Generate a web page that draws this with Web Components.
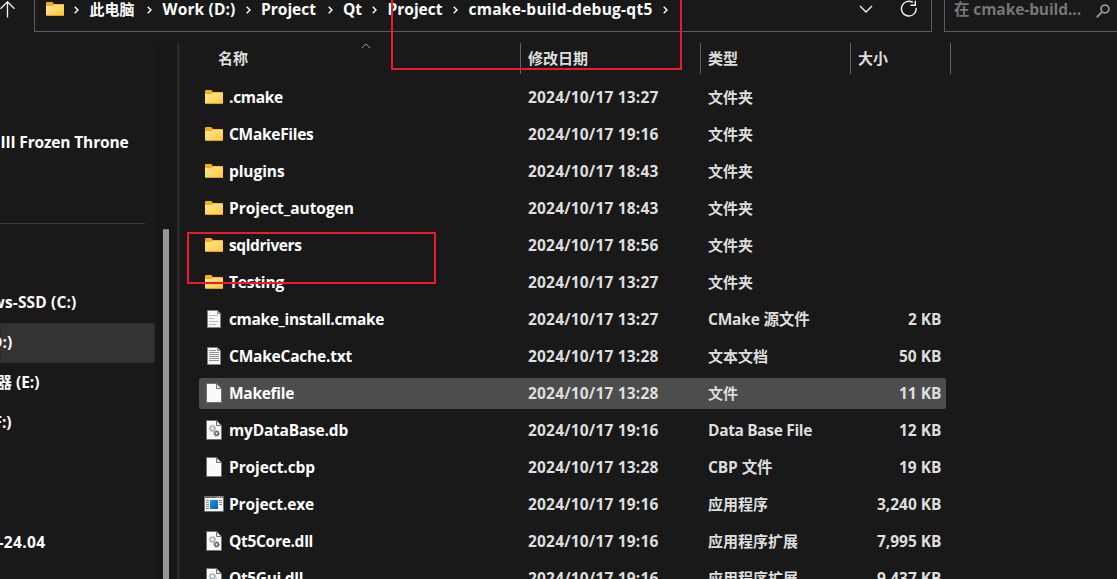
<!DOCTYPE html>
<html lang="zh-CN">
<head>
<meta charset="utf-8">
<title>cmake-build-debug-qt5</title>
<style>
html,body{margin:0;height:100%;background:#191919;overflow:hidden}
body{font:700 15.5px/20px "Open Sans","Noto Sans CJK SC",sans-serif;color:#fff}
</style>
</head>
<body>
<file-explorer></file-explorer>
<script>
const define = (name, html, setup) => customElements.define(name, class extends HTMLElement {
  connectedCallback() {
    if (this.shadowRoot) return;
    const t = document.createElement('template');
    t.innerHTML = html;
    this.attachShadow({mode: 'open'}).append(t.content.cloneNode(true));
    if (setup) setup(this, this.shadowRoot);
  }
});

/* Label whose tracking is adjusted so that it occupies the width "w". */
define('fit-label', `<style>:host{display:block;white-space:pre;line-height:18px;height:18px;padding-bottom:2px}span{display:inline-block}</style><span></span>`, (el, root) => {
  const s = root.querySelector('span');
  s.textContent = el.getAttribute('text');
  if (!/[\x21-\x7e]/.test(s.textContent)) s.style.fontSize = '15px';
  const w = parseFloat(el.getAttribute('w'));
  if (w) {
    const n = s.getBoundingClientRect().width;
    if (n) s.style.letterSpacing = ((w - n) / [...s.textContent].length).toFixed(3) + 'px';
  }
});

const page = `<path d="M.5.5h10.2l4.8 4.8v14.2H.5z" fill="#fafafa" stroke="#74706c"/><path d="M10.5.5v5h5z" fill="#e4e4e4" stroke="#74706c"/>`;
const gear = (x, y, r, c) => `<g fill="none" stroke="${c}"><circle cx="${x}" cy="${y}" r="${r}" stroke-width="1.4"/><circle cx="${x}" cy="${y}" r="${r + .9}" stroke-width="1" stroke-dasharray="1.1 1.2"/></g>`;
const smallPage = lines => `<path d="M1.5 1.5h10l3 3v14h-13z" fill="#f7f8f7" stroke="#85827f"/><path d="M11.5 1.5v3h3z" fill="#ddd" stroke="#85827f"/>${lines}`;
const icons = {
  folder: [18, 14, `<defs><linearGradient id="f" x2="1" y2="1"><stop stop-color="#ffe7a1"/><stop offset="1" stop-color="#ffc937"/></linearGradient></defs><path d="M0 1Q0 0 1 0h5.2l1.8 2h9q1 0 1 1v10q0 1-1 1H1q-1 0-1-1z" fill="#f8ad12"/><path d="M0 4h6.6l1.6-1.2H18V13H0z" fill="url(#f)"/><path d="M.5 13.5h17" stroke="#dfa126"/>`],
  page: [16, 20, page],
  gears: [16, 20, page + gear(6.4, 8.4, 2.3, '#a3adb9') + gear(10.6, 13.4, 1.8, '#59616b')],
  source: [16, 20, smallPage(`<path d="M3 6.5h9M3 9.5h5M3 12.5h9M3 15.5h7" stroke="#b8b9ba"/>`)],
  text: [16, 20, smallPage(`<path d="M3 4.5h7M3 6.5h10M3 8.5h10M3 10.5h10M3 12.5h10M3 14.5h10" stroke="#929292"/>`)],
  exe: [20, 16, `<defs><linearGradient id="e" x2="1" y2="1"><stop stop-color="#199ae4"/><stop offset="1" stop-color="#0561b8"/></linearGradient></defs><path d="M.5.5h19v15H.5z" fill="#fafafa" stroke="#716e6b"/><path d="M0 0h20v2H0z" fill="#716e6b"/><path d="M13 1h1m1 0h1m1 0h1" stroke="#ddd"/><path d="M6 4h8v9H6z" fill="url(#e)"/><path d="M2 4.5h3M2 6.5h3M2 8.5h3M2 10.5h3M2 12.5h3M15 4.5h3M15 6.5h3M15 8.5h3" stroke="#888"/>`],
  up: [17, 17, `<path d="M8.5 16.5V1M1.5 7.8l7-7 7 7" fill="none" stroke="#f2f2f2" stroke-width="1.3"/>`],
  crumb: [5, 8, `<path d="M.7.8 4 4 .7 7.2" fill="none" stroke="#fff" stroke-width="1.4"/>`],
  down: [14, 8, `<path d="M1 1l6 6 6-6" fill="none" stroke="#f2f2f2" stroke-width="1.4"/>`],
  refresh: [18, 18, `<path d="M12.8 2.4A7.4 7.4 0 1 0 16.2 7.8M15.3.7v4.6h-4.8" fill="none" stroke="#f2f2f2" stroke-width="1.4"/>`],
  search: [14, 14, `<circle cx="9" cy="5" r="3.9" fill="none" stroke="#929292" stroke-width="1.8"/><path d="M6.1 7.9.8 13.2" stroke="#929292" stroke-width="2"/>`],
  sort: [10, 6, `<path d="M.7 5.2 5 .9l4.3 4.3" fill="none" stroke="#a0a0a0"/>`]
};
define('ui-icon', `<style>:host{display:block;flex:none}svg{display:block}</style><div></div>`, (el, root) => {
  const [w, h, body] = icons[el.getAttribute('name')];
  root.querySelector('div').innerHTML = `<svg width="${w}" height="${h}" viewBox="0 0 ${w} ${h}">${body}</svg>`;
});

define('path-crumb', `<style>:host{display:flex;align-items:center;gap:10.5px;flex:none;height:20px}</style><ui-icon name="crumb"></ui-icon><slot></slot>`,
  el => { el.style.width = el.getAttribute('size') + 'px'; });

define('address-bar', `<style>
:host{display:flex;height:32px;box-sizing:border-box}
.up{width:34px}.up ui-icon{margin:1px 0 0 -1px}
.path{width:898px;height:32px;box-sizing:border-box;border:1px solid #5b5b5b;border-top:0;display:flex;align-items:flex-start;padding-left:11px}
.path>ui-icon.f{margin:2px 10px 0 0}
.actions{margin-left:auto;display:flex;gap:27px;padding-right:13px}
.actions ui-icon:first-child{margin-top:5px}
.search{margin-left:12px;flex:1;height:32px;box-sizing:border-box;border:1px solid #5b5b5b;border-top:0;border-right:0;display:flex;justify-content:space-between;padding:0 7px 0 9px;color:#767676}
.search ui-icon{margin-top:4px}
</style>
<div class="up"><ui-icon name="up"></ui-icon></div>
<div class="path"><ui-icon class="f" name="folder"></ui-icon>
<path-crumb size="73"><fit-label text="此电脑" w="45"></fit-label></path-crumb>
<path-crumb size="98.5"><fit-label text="Work (D:)" w="73"></fit-label></path-crumb>
<path-crumb size="82"><fit-label text="Project" w="55"></fit-label></path-crumb>
<path-crumb size="44.5"><fit-label text="Qt" w="19"></fit-label></path-crumb>
<path-crumb size="81"><fit-label text="Project" w="55"></fit-label></path-crumb>
<path-crumb size="210"><fit-label text="cmake-build-debug-qt5" w="184"></fit-label></path-crumb>
<path-crumb size="5"></path-crumb>
<div class="actions"><ui-icon name="down"></ui-icon><ui-icon name="refresh"></ui-icon></div></div>
<div class="search"><fit-label text="在 cmake-build..." w="127"></fit-label><ui-icon name="search"></ui-icon></div>`);

define('nav-item', `<style>:host{display:flex;height:40px;width:155px;box-sizing:border-box;border-radius:0 2px 2px 0}
:host([selected]){background:#333;box-shadow:inset 0 0 0 1px #2b2b2b}
div{display:flex;justify-content:flex-end;align-items:center;flex:none}fit-label{flex:none}</style><div></div>`, (el, root) => {
  const box = root.querySelector('div');
  box.style.width = el.getAttribute('end') + 'px';
  const f = document.createElement('fit-label');
  f.setAttribute('text', el.getAttribute('text'));
  f.setAttribute('w', el.getAttribute('w'));
  box.append(f);
});

define('nav-pane', `<style>
:host{display:flex;width:181px;flex:none;overflow:hidden}
.tree{width:155px;flex:none;padding-top:80px}
hr{margin:60px 10px 59px 0;border:0;height:1px;background:#3b3b3b}
.scroll{width:22px;background:#171717;flex:none}
.thumb{width:6px;height:350px;margin:186px 0 0 8px;background:#979797;border-top:1px solid #777;box-sizing:border-box}
.split{width:2px;background:#2b2b2b;border-right:2px solid #1f1f1f}
.gap{height:80px}
</style>
<div class="tree"><nav-item text="III Frozen Throne" w="128" end="128.5"></nav-item><hr>
<div><nav-item text="ws-SSD (C:)" w="85" end="76.5"></nav-item><nav-item selected text="D:)" w="21.5" end="12.5"></nav-item><nav-item text="器 (E:)" w="43" end="39.5"></nav-item><nav-item text="F:)" w="18" end="11.5"></nav-item><div class="gap"></div><nav-item text="-24.04" w="47" end="45.5"></nav-item></div></div>
<div class="scroll"><div class="thumb"></div></div><div class="split"></div>`);

define('column-head', `<style>:host{display:flex;height:31px;box-sizing:border-box;border-right:1px solid #636363;color:#dedede;padding:6px 0 0 7px;position:relative}
::slotted(ui-icon){position:absolute;left:156px;top:0}</style><slot></slot>`);

define('file-row', `<style>
:host{display:grid;grid-template-columns:30px 299px 180px 130px 103.5px;align-items:center;width:747px;height:31px;box-sizing:border-box;border-radius:2px;color:#dedede}
:host([selected]){background:#4d4d4d}
.icon{display:flex;justify-content:center;align-items:center;height:20px;align-self:start;margin-top:5px}.name{color:#fff}.size{display:flex;justify-content:flex-end}
</style><div class="icon"></div><div class="name"></div><div class="date"></div><div class="type"></div><div class="size"></div>`, (el, root) => {
  const [icon, name, nw, date, type, tw, size, sw] = el.data;
  const put = (c, text, w) => { const f = document.createElement('fit-label'); f.setAttribute('text', text); f.setAttribute('w', w); root.querySelector(c).append(f); };
  const i = document.createElement('ui-icon'); i.setAttribute('name', icon); root.querySelector('.icon').append(i);
  put('.name', name, nw); put('.date', date, 130.5); put('.type', type, tw);
  if (size) put('.size', size, sw);
});

const D = '2024/10/17 ';
const files = [
  ['folder', '.cmake', 54, D + '13:27', '文件夹', 45],
  ['folder', 'CMakeFiles', 84.5, D + '19:16', '文件夹', 45],
  ['folder', 'plugins', 55.5, D + '18:43', '文件夹', 45],
  ['folder', 'Project_autogen', 125, D + '18:43', '文件夹', 45],
  ['folder', 'sqldrivers', 72.5, D + '18:56', '文件夹', 45],
  ['folder', 'Testing', 55, D + '13:27', '文件夹', 45],
  ['source', 'cmake_install.cmake', 155, D + '13:27', 'CMake 源文件', 101.5, '2 KB', 33.5],
  ['text', 'CMakeCache.txt', 123, D + '13:28', '文本文档', 60, '50 KB', 42.5],
  ['page', 'Makefile', 65, D + '13:28', '文件', 30, '11 KB', 42.5],
  ['gears', 'myDataBase.db', 119, D + '19:16', 'Data Base File', 104, '12 KB', 42.5],
  ['page', 'Project.cbp', 86, D + '13:28', 'CBP 文件', 64.5, '19 KB', 42.5],
  ['exe', 'Project.exe', 85, D + '19:16', '应用程序', 60, '3,240 KB', 64.5],
  ['gears', 'Qt5Core.dll', 84, D + '19:16', '应用程序扩展', 90, '7,995 KB', 64.5],
  ['gears', 'Qt5Gui.dll', 74, D + '19:16', '应用程序扩展', 90, '9,437 KB', 64.5]
];

define('file-list', `<style>
:host{display:block;flex:1;min-width:0;overflow:hidden}
.head{display:grid;grid-template-columns:316px 180px 150px 100px;padding-left:24px}
.head column-head:first-child{padding-left:13px}
.rows{display:flex;flex-direction:column;gap:6px;padding:8px 0 0 18px}
</style>
<div class="head"><column-head><fit-label text="名称" w="30"></fit-label><ui-icon name="sort"></ui-icon></column-head><column-head><fit-label text="修改日期" w="60"></fit-label></column-head><column-head><fit-label text="类型" w="30"></fit-label></column-head><column-head><fit-label text="大小" w="30"></fit-label></column-head></div>
<div class="rows"></div>`, (el, root) => {
  files.forEach(f => {
    const r = document.createElement('file-row');
    r.data = f;
    if (f[1] === 'Makefile') r.setAttribute('selected', '');
    root.querySelector('.rows').append(r);
  });
});

define('file-explorer', `<style>
:host{display:flex;flex-direction:column;width:1117px;height:579px;overflow:hidden;position:relative;background:#191919}
main{display:flex;flex:1;min-height:0;margin-top:11px}
.mark{position:absolute;box-sizing:border-box;border:2px solid #ed1c24}
.a{left:391px;top:-10px;width:291px;height:80px}
.b{left:187px;top:232px;width:249px;height:52px}
</style>
<address-bar></address-bar><main><nav-pane></nav-pane><file-list></file-list></main>
<div class="mark a"></div><div class="mark b"></div>`);
</script>
</body>
</html>
